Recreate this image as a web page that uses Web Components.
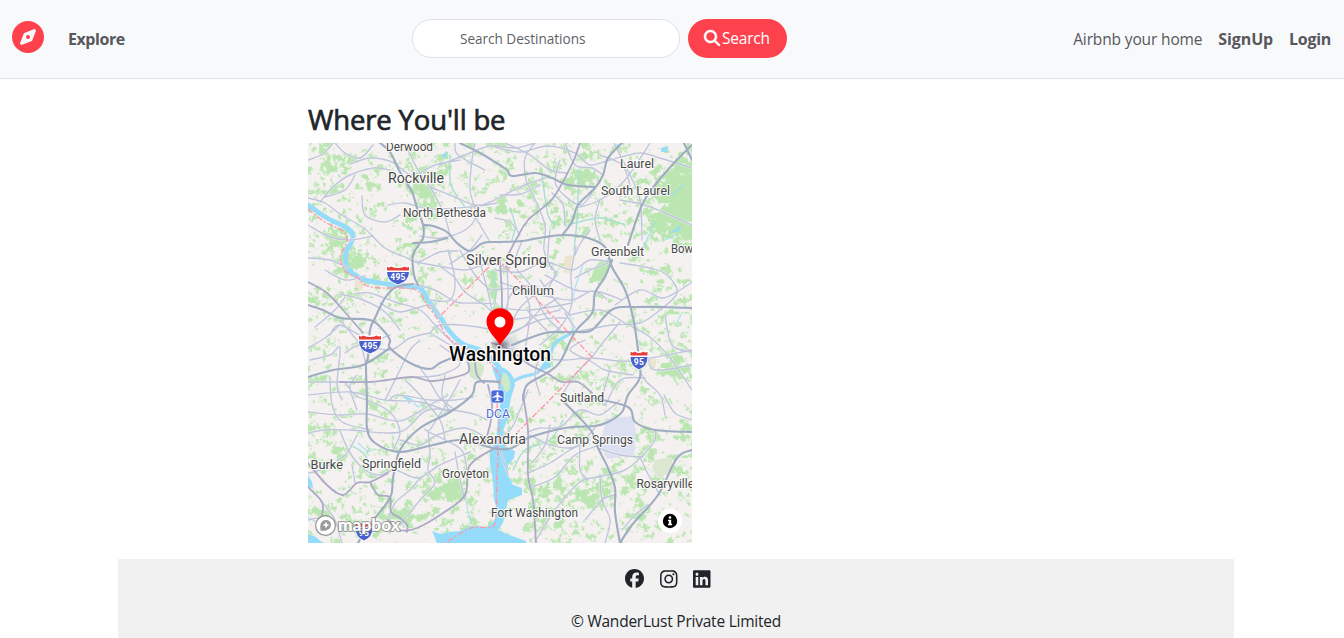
<!DOCTYPE html>
<html lang="en">
<head>
<meta charset="utf-8">
<title>WanderLust</title>
<style>
html,body{margin:0;height:100%}
body{font-family:"Open Sans","Noto Sans",sans-serif;font-size:16px;line-height:24px;color:#212529;background:#fff;overflow:hidden}
</style>
</head>
<body>
<wander-page></wander-page>
<script>
const define = (name, html, setup) => customElements.define(name, class extends HTMLElement {
  constructor() {
    super();
    this.attachShadow({mode: 'open'}).innerHTML = html;
    if (setup) setup(this.shadowRoot, this);
  }
});

const ICONS = {
  compass: ['0 0 512 512', 'M256 512A256 256 0 1 0 256 0a256 256 0 1 0 0 512zm50.7-186.9L162.4 380.6c-19.4 7.5-38.5-11.6-31-31l55.5-144.3c3.3-8.5 9.9-15.1 18.4-18.4l144.3-55.5c19.4-7.5 38.5 11.6 31 31L325.1 306.7c-3.2 8.5-9.9 15.1-18.4 18.4zM288 256a32 32 0 1 0-64 0 32 32 0 1 0 64 0z'],
  search: ['0 0 512 512', 'M416 208c0 45.9-14.9 88.3-40 122.7L502.6 457.4c12.5 12.5 12.5 32.8 0 45.3s-32.8 12.5-45.3 0L330.7 376c-34.4 25.2-76.8 40-122.7 40C93.1 416 0 322.9 0 208S93.1 0 208 0S416 93.1 416 208zM208 352a144 144 0 1 0 0-288 144 144 0 1 0 0 288z'],
  facebook: ['0 0 512 512', 'M512 256C512 114.6 397.4 0 256 0S0 114.6 0 256C0 376 82.7 476.8 194.2 504.5V334.2H141.4V256h52.8V222.3c0-87.1 39.4-127.5 125-127.5 16.2 0 44.2 3.2 55.7 6.4V172c-6-.6-16.5-1-29.6-1-42 0-58.2 15.9-58.2 57.2V256h83.6l-14.4 78.2H287V510.1C413.8 494.8 512 386.9 512 256z'],
  instagram: ['0 0 448 512', 'M224.1 141c-63.6 0-114.9 51.3-114.9 114.9s51.3 114.9 114.9 114.9S339 319.5 339 255.900 287.700 141 224.100 141zm0 189.600c-41.100 0-74.700-33.500-74.700-74.700s33.500-74.700 74.700-74.700 74.700 33.500 74.700 74.700-33.600 74.700-74.700 74.700zm146.400-194.300c0 14.900-12 26.800-26.800 26.800-14.900 0-26.800-12-26.800-26.800s12-26.800 26.800-26.800 26.800 12 26.800 26.800zm76.100 27.200c-1.700-35.900-9.900-67.700-36.200-93.900-26.200-26.200-58-34.400-93.900-36.200-37-2.100-147.900-2.100-184.900 0-35.800 1.700-67.600 9.900-93.900 36.100s-34.400 58-36.200 93.900c-2.100 37-2.100 147.900 0 184.900 1.700 35.900 9.900 67.700 36.200 93.900s58 34.400 93.900 36.200c37 2.100 147.900 2.100 184.900 0 35.900-1.700 67.700-9.900 93.900-36.200 26.200-26.200 34.400-58 36.200-93.900 2.100-37 2.100-147.800 0-184.800zM398.800 388c-7.800 19.600-22.900 34.700-42.600 42.600-29.500 11.700-99.500 9-132.100 9s-102.700 2.600-132.100-9c-19.600-7.800-34.700-22.900-42.600-42.600-11.700-29.500-9-99.500-9-132.100s-2.600-102.700 9-132.100c7.800-19.600 22.900-34.700 42.600-42.600 29.500-11.700 99.500-9 132.100-9s102.700-2.600 132.100 9c19.600 7.800 34.700 22.900 42.600 42.600 11.700 29.500 9 99.500 9 132.100s2.700 102.700-9 132.100z'],
  linkedin: ['0 0 448 512', 'M416 32H31.900C14.300 32 0 46.500 0 64.300v383.400C0 465.500 14.300 480 31.900 480H416c17.600 0 32-14.500 32-32.300V64.300c0-17.800-14.400-32.300-32-32.300zM135.400 416H69V202.200h66.500V416zm-33.200-243c-21.300 0-38.500-17.300-38.500-38.500S80.900 96 102.200 96c21.200 0 38.500 17.300 38.500 38.500 0 21.300-17.200 38.500-38.500 38.500zm282.100 243h-66.400V312c0-24.800-.5-56.700-34.500-56.700-34.600 0-39.900 27-39.900 54.900V416h-66.400V202.200h63.700v29.200h.9c8.900-16.800 30.600-34.500 62.900-34.500 67.200 0 79.700 44.300 79.700 101.900V416z']
};
customElements.define('wl-icon', class extends HTMLElement {
  connectedCallback() {
    if (this.shadowRoot) return;
    const [box, d] = ICONS[this.getAttribute('name')];
    this.attachShadow({mode: 'open'}).innerHTML =
      `<style>:host{display:block}svg{display:block;width:100%;height:100%;overflow:visible}:host([name=search]) path{stroke:currentColor;stroke-width:16px}</style><svg viewBox="${box}" fill="currentColor"><path d="${d}"/></svg>`;
  }
});

define('nav-link', `<style>
:host{display:block;color:#56585b;font-weight:400;white-space:nowrap}
:host([strong]){font-weight:700}
</style><slot></slot>`);

define('search-form', `<style>
:host{display:flex;gap:8px}
.field{box-sizing:border-box;width:268px;height:39px;border:1px solid #dee2e6;border-radius:20px;background:#fff;padding:0 0 0 47px;font-size:13.600px;line-height:38px;letter-spacing:-.03px;color:#5d6268}
.btn{box-sizing:border-box;width:99px;height:39px;border-radius:20px;background:#fe424d;color:#fff;display:flex;align-items:center;padding-left:16px;gap:2px;font-size:15.500px;line-height:36px;letter-spacing:-.2px}
.btn span{margin-bottom:2px}
wl-icon{width:16px;height:16px;margin-bottom:2px}
</style><div class="field">Search Destinations</div><div class="btn"><wl-icon name="search"></wl-icon><span>Search</span></div>`);

define('wl-navbar', `<style>
:host{box-sizing:border-box;display:grid;grid-template-columns:412px 1fr auto;height:79px;background:#f8f9fb;border-bottom:1px solid #dee2e6;padding-right:13px}
.brand{display:flex;gap:24px;padding:21px 0 0 12px}
.brand wl-icon{width:32px;height:32px;color:#fe424d}
.brand nav-link{margin-top:6px;letter-spacing:-.45px}
search-form{padding-top:19px}
.right{display:flex;gap:16px;padding-top:27px}
.a{font-size:15.500px;letter-spacing:-.14px}.b{letter-spacing:-.12px}.c{letter-spacing:-.3px}
</style>
<div class="brand"><wl-icon name="compass"></wl-icon><nav-link strong>Explore</nav-link></div>
<search-form></search-form>
<div class="right"><nav-link class="a">Airbnb your home</nav-link><nav-link strong class="b">SignUp</nav-link><nav-link strong class="c">Login</nav-link></div>`);

/* Street map: coordinates are offset by (308,143); each string is one smoothed polyline. */
const curve = s => {
  const p = s.trim().split(/\s+/).map(v => v.split(',').map(Number));
  let d = 'M' + p[0];
  for (let i = 0; i < p.length - 1; i++) {
    const a = p[i - 1] || p[i], b = p[i], c = p[i + 1], e = p[i + 2] || c;
    d += `C${(b[0] + (c[0] - a[0]) / 6).toFixed(1)},${(b[1] + (c[1] - a[1]) / 6).toFixed(1)} ${(c[0] - (e[0] - b[0]) / 6).toFixed(1)},${(c[1] - (e[1] - b[1]) / 6).toFixed(1)} ${c}`;
  }
  return d;
};
const MAJOR = [
 '380,143 390,152 400,172 412,192 417,208 423,225 423,238 413,255 414,275 418,285',
 '413,284 396,287 385,298 375,318 370,330 368,357 366,365 367,400 367,428 375,443 400,452 433,445 460,440 485,446 497,449 512,448 528,438 555,430 572,427 595,426 608,422 622,412 628,395 640,377 638,350 633,317 625,290 612,267 605,247 588,238 565,235 545,237 522,241 500,242 483,243 470,251 457,243 447,232 433,226 423,225',
 '460,143 480,153 495,162 507,170 512,176 535,173 552,178 568,185 595,187',
 '622,143 608,158 603,175 595,188 578,205 572,222 563,234',
 '692,145 675,162 655,185 642,205 628,245',
 '612,260 605,277 595,293 592,313 575,332 560,362 547,373 527,385 523,400',
 '692,308 662,307 638,307 613,309 592,330 575,332 545,333 512,345',
 '308,305 323,310 340,318 370,320 383,330 390,340 390,348 410,363 430,369 440,363 460,355 480,351',
 '308,377 333,370 363,365 390,348', '413,243 430,242 447,238',
 '500,382 477,382 472,395 450,412 420,428 400,450 393,478 390,498 367,528 358,543',
 '592,398 628,407 635,422 655,430 692,432', '684,143 692,160',
 '562,400 575,413 592,432 598,448 608,468 615,488 615,512 620,543',
 '692,450 677,458 658,495 632,525 620,543'];
const PURPLE = [
 '580,143 573,162 553,198 528,220 517,238 508,255',
 '308,282 327,293 343,310 363,333', '340,382 370,382 387,380 413,377 433,381 467,373 467,360',
 '497,447 470,465 465,495 443,513 417,528 400,530 388,520',
 '308,463 327,485 343,495 357,483 370,482 388,473', '308,487 322,502 322,515',
 '523,395 528,430 528,475 533,500 536,543', '547,373 562,382 578,382 592,393',
 '488,385 492,405 490,425 484,445', '370,482 378,495 390,497 391,512 400,518 407,525 407,532',
 '500,262 502,300 500,330', '492,343 510,350 530,365 547,373', '475,362 477,375 484,383'];
const MINOR = [
 '308,160 323,154 333,143','308,198 325,203 340,214 365,229 385,248 407,258 418,262 440,252 458,251',
 '335,143 345,153 360,158 373,145','350,164 370,158 392,162 412,175 435,165 460,160',
 '320,202 332,188 348,176 373,168 390,170','388,205 405,203 430,209 470,207 497,203','362,196 365,215 385,222 400,215',
 '408,150 418,170 430,187 440,205 446,220 450,235','430,187 450,195 475,205 490,202 512,191 525,185 545,178',
 '475,143 472,160 470,190 476,215 465,230 440,238 420,236','440,165 465,155 490,146 515,148 535,143',
 '535,143 525,158 526,180 533,195 545,225 544,250 552,270','505,143 530,155 550,170 568,173','500,195 521,194 540,185',
 '495,147 520,152 548,146 575,153 590,165 610,160 640,153 660,158 692,168','552,193 563,205 565,226',
 '495,218 510,222 520,235','470,207 480,225 490,242','600,199 595,220 600,240','560,160 556,185 580,205 595,188',
 '576,208 600,200 625,180 650,143','614,143 630,175 640,200 642,240','620,200 645,205 665,213 692,225',
 '576,246 571,275 572,303 562,325 540,345','590,230 580,244 575,255','608,263 590,270 575,278',
 '565,143 575,165 592,168 603,175','550,230 548,260 556,275 540,290 520,308 508,330','600,155 622,165 630,185',
 '620,263 650,268 667,275 677,293 660,310 640,323 612,325 575,332','612,262 590,260 572,270 545,262 520,272 495,270',
 '505,260 507,270 508,300 504,331','522,241 515,265 530,285 545,315 560,330','557,271 546,290 530,285 510,296 505,325',
 '570,315 600,310 625,323 650,337 670,358 692,390','692,282 680,290 662,298 640,290 615,305','570,315 555,300 540,280',
 '622,300 600,292 575,290 545,275','500,282 530,292 570,300 592,291 607,299','565,313 575,328','500,320 525,318 560,310',
 '500,308 530,310 572,303','665,315 672,345 692,352','592,357 575,375 562,395','530,355 560,360 592,358 630,361 692,350',
 '592,357 605,340 620,322','648,355 655,370 692,365','610,370 603,395 605,405 620,380 645,378','635,360 645,380 660,395 665,415',
 '585,340 570,350 592,362 605,370 633,375','565,318 540,320 500,338','528,311 548,332','501,337 522,328 540,310 558,298',
 '455,143 458,155 485,170','355,175 345,190 325,197','413,284 435,290 456,302 475,303 497,304',
 '441,267 455,278 465,292 490,310 500,332','415,262 438,266 465,270 488,264 510,268','480,262 488,292 496,330',
 '448,250 455,280 450,300 430,300','430,333 440,325 470,326 500,331','460,250 475,275 490,290','450,264 470,250 482,235',
 '308,225 330,237 350,240 373,236','308,258 330,260 348,268','330,335 340,325 370,340 390,335','308,348 325,338 340,325',
 '340,294 363,300 385,312 400,330','355,294 370,293 395,302 420,310 435,325 455,345','380,303 400,312 430,305 440,316',
 '340,320 360,345 366,365','315,327 335,310 345,297','325,270 345,280 365,276','345,353 360,345 390,350 410,338 430,333',
 '310,360 330,355 340,348 337,385 342,400','308,382 340,382','308,395 350,392 385,400 420,402 450,412','330,377 332,404 342,422 370,430',
 '357,375 350,387 357,410','308,412 340,415 367,414 400,421 430,405 448,395','308,433 325,430 350,430 400,432 428,410 470,413 487,420',
 '340,431 350,453 365,470 380,475 395,470 418,478 440,465 470,452','367,400 390,412 400,432 393,450','345,382 355,395 367,400',
 '428,430 430,455 428,470 435,483 420,500 400,525','400,440 420,445 437,435 465,428 490,440','455,452 460,480 465,500',
 '425,430 445,440 463,452 468,480','385,400 400,370 410,350 420,340','390,400 398,395 430,400 455,400 473,397',
 '405,380 420,395 440,420 445,440','440,345 460,363 440,375 417,377','430,333 450,345 475,360','418,365 430,382 440,398 455,410',
 '357,435 345,455 320,470 308,473','352,465 355,483','420,478 410,490 395,503 388,520','308,520 325,518 345,530','322,502 335,520 342,543',
 '488,447 510,430 520,410 528,390','528,432 540,428 560,427 580,410 600,415 620,400','530,435 550,445 575,447 595,428',
 '528,473 550,463 570,450 590,440','532,487 555,477 575,455 600,445','536,540 555,510 580,482 598,477 625,470 643,455 655,440 655,430',
 '532,463 545,445 550,425','580,445 580,470 588,480','600,475 602,500 610,520 605,543','640,457 650,478 660,495','598,448 620,455 643,457',
 '565,400 580,402 592,398','585,520 602,500 615,495','500,450 508,475','648,505 635,515 622,530','692,420 675,413 664,395',
 '540,355 535,375 540,395','500,348 525,350 550,353','492,290 520,290 530,310 525,350','460,380 450,398 430,430','445,375 442,395 450,412'];
const pathOf = l => l.map(curve).join('');
const hash = (x, y) => { let n = Math.imul(x, 374761393) + Math.imul(y, 668265263); n = Math.imul(n ^ (n >>> 13), 1274126177); return ((n ^ (n >>> 16)) >>> 0) / 4294967296; };
const noise = (x, y) => {
  const i = Math.floor(x), j = Math.floor(y), s = t => t * t * (3 - 2 * t), u = s(x - i), v = s(y - j);
  return (hash(i, j) * (1 - u) + hash(i + 1, j) * u) * (1 - v) + (hash(i, j + 1) * (1 - u) + hash(i + 1, j + 1) * u) * v;
};
/* woodland density: x, y, radius x, radius y, strength */
const WOODS = [[682,188,26,26,.5],[678,224,24,18,.36],[337,240,13,14,.34],[352,263,12,13,.3],[493,282,5,21,.5],[446,487,17,11,.36],
 [425,192,10,8,.25],[445,165,8,18,.2],[582,172,8,22,.24],[675,367,14,13,.32],[408,225,8,24,.15],[500,145,12,10,.2],
 [590,490,14,16,.22],[400,515,20,10,.26],[635,510,18,22,.13],[560,495,35,25,.11],[325,175,18,28,.11],[540,220,22,40,.06],[330,450,22,30,.08],
 [325,515,20,20,.1],[573,377,12,7,.26],[550,340,11,6,.26],[667,315,28,40,.07],[605,220,22,15,.08],[335,295,22,15,.09],[502,205,8,8,.3],
 [495,355,85,60,-.12],[450,385,50,35,-.05],[530,275,60,30,-.06],[460,220,50,50,-.05],[650,450,40,35,.04]];
const greens = () => {
  let a = '', b = '';
  for (let y = 143; y < 543; y += 1.25) for (let x = 308; x < 692; x += 1.25) {
    let v = noise((x + y * .5) / 10, y / 6) * .36 + noise(x / 3.6 + 90, y / 4 + 40) * .36 + noise((x - y) / 2 + 200, (x + y) / 2.8 + 30) * .28;
    for (const [cx, cy, rx, ry, k] of WOODS) { const q = ((x - cx) / rx) ** 2 + ((y - cy) / ry) ** 2; if (q < 4) v += k * Math.exp(-q); }
    if (v > .645) a += `M${x},${y}h1.3v1.3h-1.3z`; else if (v > .612) b += `M${x},${y}h1.3v1.3h-1.3z`;
  }
  return `<path fill="#d8eed2" d="${b}"/><path fill="#bbe6b2" d="${a}"/>`;
};
const LABELS = [['Derwood',386,150.5,47,12],['Rockville',388,182.5,56,14],['North Bethesda',403,217,83,12.3],['Laurel',620,168,34,12.3],
 ['South Laurel',601,195,69,12.3],['Greenbelt',591,256,53,12.3],['Bow',671,252.5,22,12.3],['Silver Spring',466,265,81,14],['Chillum',512,294.5,42,12.3],
 ['Suitland',560,402,44,12.3],['Alexandria',459,443.5,67,14],['Camp Springs',557,444,76,12.3],['Burke',310.5,469,32.5,12.3],['Springfield',362,467.5,59,12.3],
 ['Groveton',442,478,47,12.3],['Rosaryville',636.5,488,57.5,12.3],['Fort Washington',491,517,87,12.3]];
const shield = (x, y, t, w) => `<g transform="translate(${x} ${y})"><path d="M${-w-1},-10q3,1 5,-1q${w-4},3 ${2*w-8},0q2,2 5,1q2,14 ${-w-1},19.500q${-w-3},-5.500 ${-w-1},-19.500z" fill="#fff"/><path d="M${-w},-4H${w}Q${w},5 0,8.500Q${-w},5 ${-w},-4z" fill="#4760cb"/><path d="M${-w},-9q3,1 4,-.5q${w-4},3 ${2*w-8},0q1,1.500 4,.5v3.500H${-w}z" fill="#e83c3c"/><text x="0" y="3.600" text-anchor="middle" font-size="8.500" font-weight="700" letter-spacing=".3" fill="#fff">${t}</text></g>`;

define('city-map', `<style>
:host{display:block;width:384px;height:400px}
svg{display:block;font-family:Roboto,sans-serif}
.l text{fill:#484848;stroke:#fff;stroke-opacity:.85;stroke-width:2px;paint-order:stroke;stroke-linejoin:round;font-weight:400}
.r path{fill:none;stroke-linecap:round;stroke-linejoin:round}
</style><svg width="384" height="400" viewBox="308 143 384 400"></svg>`, root => {
  const river = '308,205 327,218 347,228 353,238 346,253 347,267 360,278 380,283 403,286 420,288 428,300 440,317 450,332 463,344 480,350 493,360 504,374';
  const bank = '308,209 325,222 343,231 347,242 341,255 344,270 358,278 365,285 380,288 403,288 418,291 426,303 438,320 446,335 460,346 480,354 492,365 500,378 497,400 499,430 497,475 496,515 492,527 471,528 445,543';
  root.querySelector('svg').innerHTML = `
<defs><radialGradient id="sh"><stop offset="0" stop-color="#000" stop-opacity=".4"/><stop offset="1" stop-color="#000" stop-opacity="0"/></radialGradient>
<radialGradient id="city"><stop offset="0" stop-color="#b9b9ca"/><stop offset="1" stop-color="#dcdce6" stop-opacity="0"/></radialGradient></defs>
<rect x="308" y="143" width="384" height="400" fill="#f4f1f0"/>
${greens()}
<path d="M600,261L611,263L603,282L591,279L594,268z" fill="#bbe6b2"/>
<path d="M606,419L632,416L636,430L634,455L607,459L600,445z" fill="#dde0f1"/>
<path d="M655,460L672,457L672,472L658,478L652,468z" fill="#dce7d2"/>
<path d="M355,280L365,282L361,290L354,286zM565,256L574,255L572,274L563,272zM650,358L657,359L655,368L649,365z" fill="#eee3ce"/>
<path d="M468,363Q476,358 484,366Q484,377 476,380Q467,378 468,363z" fill="#d3e8ca"/>
<ellipse cx="505" cy="344" rx="17" ry="15" fill="url(#city)"/>
<g fill="none" stroke="#94dcfa" stroke-linecap="round" stroke-linejoin="round">
<path d="${curve(river)}" stroke-width="4.800"/>
<path d="${curve('508,384 522,377 538,372 550,355 555,343 568,335 573,331')}" stroke-width="3.200"/>
<path d="${pathOf(['573,331 570,315 572,303 576,285 584,262','405,398 412,400 418,407 423,402','358,443 368,451 374,449','466,500 468,512 472,522','676,235 665,240','682,313 676,324','308,517 320,525 330,535','655,222 642,250','684,185 670,195 650,190'])}" stroke-width="1.100" opacity=".8"/>
<path d="${pathOf(['513,470 525,450 550,440 563,420','510,208 515,225 512,240','542,175 548,215 556,225','450,155 451,185 465,207','568,225 600,218 625,225','579,170 577,220 574,250','492,270 496,290 494,310','350,445 365,455 372,478'])}" stroke="#aadfd0" stroke-width="1.400"/></g>
<path d="M504,368Q514,373 515,385L511,398L507,420L503,431L505,447L515,451L514,458L508,465L508,475L513,485L522,488L522,495L508,500L505,515L503,523L498,530L512,536L526,541V543H437L432,531L440,534L450,532L460,531L471,526L488,527L495,519L497,508L494,500L493,480L490,465L490,452L496,440L498,420L501,400L498,385L492,367zM308,475L312,482L313,488L308,487zM308,534L316,537L323,543H308zM661,148L668,146L667,152L661,152zM614,145L620,144L616,149zM441,156L447,151L446,158zM670,233L681,225L679,231zM403,395L414,400L409,404zM540,372L549,356L551,367z" fill="#94dcfa"/>
<path d="M503,372Q512,376 510,389L506,393L501,383z" fill="#cdebc7"/>
<g class="r"><path d="${pathOf(MINOR)}" stroke="#f7f5f8" stroke-width="2.600" opacity=".6"/><path d="${pathOf(MINOR)}" stroke="#c0c6da" stroke-width="1.400"/>
<path d="${pathOf(PURPLE)}" stroke="#acaac6" stroke-width="1.800"/><path d="${pathOf(MAJOR)}" stroke="#9fadc2" stroke-width="2.100"/></g>
<path d="${curve(bank)}M488,268L441,315M497,258L592,357L503,447M497,258L488,268" fill="none" stroke="#ff96a9" stroke-width="1.300" stroke-dasharray="6 2 2 2"/>
${shield(398,276,'495',11)}${shield(370,345,'495',11)}${shield(639,361,'95',8.500)}${shield(364,532,'95',8.500)}
<g class="l">${LABELS.map(([t,x,y,w,s]) => `<text x="${x}" y="${y}" font-size="${s}" textLength="${w}" lengthAdjust="spacingAndGlyphs">${t}</text>`).join('')}
<text x="486" y="418" font-size="12.300" textLength="24" lengthAdjust="spacingAndGlyphs" style="fill:#4d6bd8">DCA</text></g>
<rect x="491" y="390" width="13" height="13" rx="2.500" fill="#4a6bdb" stroke="#fff" stroke-width=".7"/><path d="M497.500 391.500l.9 1v2.500l4 2v1l-4-1v2.500l1.300 1v.8l-2.200-.5-2.200.5v-.8l1.300-1v-2.500l-4 1v-1l4-2v-2.500z" fill="#fff"/>
<ellipse cx="500" cy="345" rx="11" ry="6" fill="url(#sh)"/>
<text x="449" y="361" font-size="19.500" font-weight="500" textLength="102" lengthAdjust="spacingAndGlyphs" fill="#080808" stroke="#fff" stroke-opacity=".9" stroke-width="2.500" paint-order="stroke" stroke-linejoin="round">Washington</text>
<path d="M500 345.500C496.500 338.500 486.500 331 486.500 321.800a13.500 13.500 0 0 1 27 0C513.500 331 503.500 338.500 500 345.500z" fill="#f00"/><circle cx="500" cy="322" r="5.500" fill="#fff"/>
<circle cx="325.500" cy="525.500" r="9.500" fill="none" stroke="#777" stroke-opacity=".75" stroke-width="2"/><circle cx="325.500" cy="525.500" r="9.300" fill="#fff"/><path d="M320.500 530.500c-1-6 .5-10.500 5.500-10.500 6 0 6 7 3 9s-5.500 2-8.500 1.500z" fill="#999"/><path d="M326 521.500l1 2.500 2.500 1-2.500 1-1 2.500-1-2.500-2.500-1 2.500-1z" fill="#fff"/>
<text x="338" y="530.500" font-family="Lato,sans-serif" font-size="17.500" font-weight="900" textLength="62" lengthAdjust="spacingAndGlyphs" fill="#fff" stroke="#777" stroke-opacity=".7" stroke-width="2" paint-order="stroke" stroke-linejoin="round">mapbox</text>
<circle cx="670" cy="521" r="12" fill="#fff"/><circle cx="670" cy="521" r="7.200"/><circle cx="670" cy="517.500" r="1.300" fill="#fff"/><path d="M668 519.800h3.200v4h.9v1.500h-4.100v-1.500h.9v-2.500H668z" fill="#fff"/>`;
});

define('map-section', `<style>
:host{display:block;padding:25px 0 0 308px}
h3{margin:0 0 7px;font-size:27.500px;line-height:32px;font-weight:400;-webkit-text-stroke:.7px currentColor;letter-spacing:-.15px;white-space:nowrap}
</style><h3><slot></slot></h3><city-map></city-map>`);

define('wl-footer', `<style>
:host{box-sizing:border-box;display:flex;flex-direction:column;align-items:center;height:79px;margin:16px 110px 0 118px;background:#f1f1f1;padding-top:9.500px}
.icons{display:flex;align-items:center;gap:16px;height:20px;margin-right:17px}
wl-icon{width:17.500px;height:20px}wl-icon[name=facebook]{width:19px;height:19px}
p{margin:20.500px 0 0;font-size:15.500px;letter-spacing:-.23px;white-space:nowrap}
</style><div class="icons"><wl-icon name="facebook"></wl-icon><wl-icon name="instagram"></wl-icon><wl-icon name="linkedin"></wl-icon></div><p>© WanderLust Private Limited</p>`);

define('wander-page', `<style>:host{display:block}</style><wl-navbar></wl-navbar><map-section>Where You'll be</map-section><wl-footer></wl-footer>`);
</script>
</body>
</html>
